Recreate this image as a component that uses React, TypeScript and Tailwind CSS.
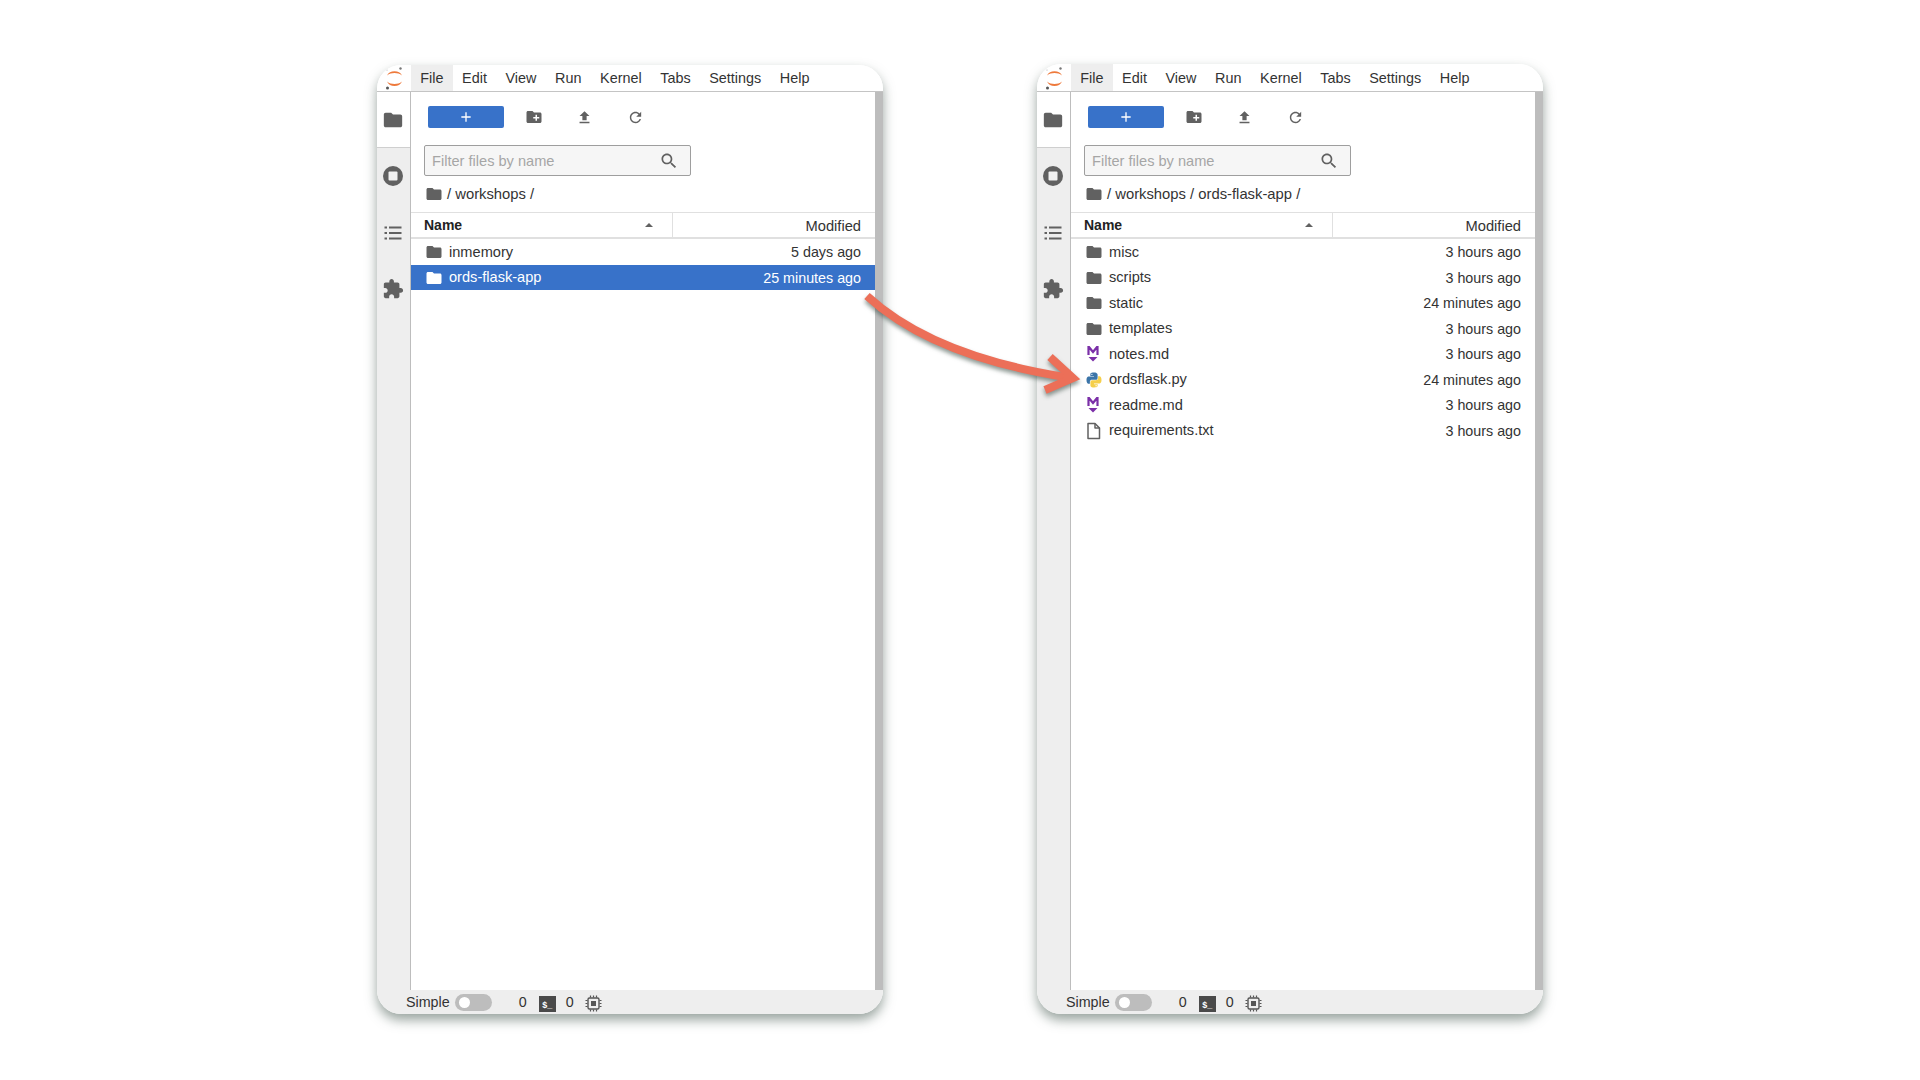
type FileKind = "folder" | "markdown" | "python" | "text";

interface FileRow {
  name: string;
  modified: string;
  kind: FileKind;
  selected?: boolean;
}

const FOLDER_PATH = "M10 4H4c-1.1 0-1.99.9-1.99 2L2 18c0 1.1.9 2 2 2h16c1.1 0 2-.9 2-2V8c0-1.1-.9-2-2-2h-8l-2-2z";

const menuItems = ["File", "Edit", "View", "Run", "Kernel", "Tabs", "Settings", "Help"];

const leftRows: FileRow[] = [
  { name: "inmemory", modified: "5 days ago", kind: "folder" },
  { name: "ords-flask-app", modified: "25 minutes ago", kind: "folder", selected: true },
];

const rightRows: FileRow[] = [
  { name: "misc", modified: "3 hours ago", kind: "folder" },
  { name: "scripts", modified: "3 hours ago", kind: "folder" },
  { name: "static", modified: "24 minutes ago", kind: "folder" },
  { name: "templates", modified: "3 hours ago", kind: "folder" },
  { name: "notes.md", modified: "3 hours ago", kind: "markdown" },
  { name: "ordsflask.py", modified: "24 minutes ago", kind: "python" },
  { name: "readme.md", modified: "3 hours ago", kind: "markdown" },
  { name: "requirements.txt", modified: "3 hours ago", kind: "text" },
];

function Glyph({ d, size, className }: { d: string; size: number; className?: string }) {
  return (
    <svg width={size} height={size} viewBox="0 0 24 24" className={className} fill="currentColor">
      <path d={d} />
    </svg>
  );
}

function JupyterLogo() {
  return (
    <svg width="20" height="26" viewBox="0 0 20 26">
      <path d="M3 10.500C4.500 7.500 7 6.200 10.500 6.200s6 1.300 7.500 4.300c-2.300-1.700-4.700-2.400-7.500-2.400S5.300 8.800 3 10.500z" fill="#ee7a3c" />
      <path d="M3 16.500c1.500 3 4 4.500 7.500 4.500s6-1.500 7.500-4.500c-2.300 1.800-4.700 2.500-7.500 2.500S5.300 18.300 3 16.500z" fill="#ee7a3c" />
      <circle cx="16.500" cy="3.500" r="1.200" fill="#777777" />
      <circle cx="3.500" cy="23" r="1.500" fill="#555555" />
      <circle cx="3" cy="5" r=".6" fill="#aaaaaa" />
    </svg>
  );
}

function MarkdownIcon() {
  return (
    <svg width="16" height="20" viewBox="0 0 16 20">
      <path d="M3.500 11V3.200h.6L8 8l3.900-4.800h.6V11" fill="none" stroke="#7b2fa8" strokeWidth="2.200" />
      <path d="M3.500 13h9L8 17.500z" fill="#7b2fa8" />
    </svg>
  );
}

function PythonIcon() {
  const half = "M11.900 2C6.800 2 7.100 4.200 7.100 4.200v2.300H12v.7H5.200S2 6.800 2 12s2.800 5 2.800 5h1.700v-2.400s-.1-2.800 2.800-2.800h4.800s2.700 0 2.700-2.600V4.700S16.700 2 11.900 2zM9.200 3.500a.9.900 0 1 1 0 1.800.9.900 0 0 1 0-1.800z";
  return (
    <svg width="18" height="18" viewBox="0 0 24 24">
      <path d={half} fill="#3a74a8" />
      <path d={half} fill="#f5cf4b" transform="rotate(180 12 12)" />
    </svg>
  );
}

function TextFileIcon() {
  return (
    <svg width="17" height="18" viewBox="0 0 17 18" fill="none" stroke="#616161" strokeWidth="1.500" strokeLinejoin="round">
      <path d="M3 1.500h7l4.500 4.500v10.500H3z" />
      <path d="M10 1.500V6h4.500" />
    </svg>
  );
}

function ChipIcon() {
  return (
    <svg width="17" height="17" viewBox="0 0 17 17" fill="none" stroke="#555555">
      <rect x="3" y="3" width="11" height="11" rx="1.500" strokeWidth="1.400" />
      <rect x="6" y="6" width="5" height="5" fill="#555555" stroke="none" />
      <path d="M5.500 .5v2M8.500 .5v2M11.500 .5v2M5.500 14.500v2M8.500 14.500v2M11.500 14.500v2M.5 5.500h2M.5 8.500h2M.5 11.500h2M14.500 5.500h2M14.500 8.500h2M14.500 11.500h2" strokeWidth="1.200" />
    </svg>
  );
}

function RowIcon({ kind, selected }: { kind: FileKind; selected?: boolean }) {
  if (kind === "markdown") return <MarkdownIcon />;
  if (kind === "python") return <PythonIcon />;
  if (kind === "text") return <TextFileIcon />;
  return <Glyph d={FOLDER_PATH} size={18} className={selected ? "text-white" : "text-[#616161]"} />;
}

function Sidebar() {
  return (
    <div className="flex w-[34px] shrink-0 flex-col border-r border-[#bdbdbd] bg-[#eeeeee] pr-px text-[#616161]">
      {/* Active tab */}
      <div className="-mr-px flex h-[56px] items-center justify-center border-b border-[#cfcfcf] bg-white pr-px">
        <Glyph d={FOLDER_PATH} size={22} />
      </div>
      <div className="flex h-[56px] items-center justify-center">
        <svg width="22" height="22" viewBox="0 0 22 22">
          <circle cx="11" cy="11" r="10" fill="currentColor" />
          <rect x="6.500" y="6.500" width="9" height="9" rx="1" fill="#f2f2f2" />
        </svg>
      </div>
      <div className="flex h-[57px] items-center justify-center">
        <svg width="20" height="20" viewBox="0 0 20 20" fill="currentColor">
          <rect x="1.500" y="3.500" width="2.500" height="2" />
          <rect x="6" y="3.500" width="12.500" height="2" />
          <rect x="1.500" y="9" width="2.500" height="2" />
          <rect x="6" y="9" width="12.500" height="2" />
          <rect x="1.500" y="14.500" width="2.500" height="2" />
          <rect x="6" y="14.500" width="12.500" height="2" />
        </svg>
      </div>
      <div className="flex h-[56px] items-center justify-center">
        <Glyph
          size={22}
          d="M20.500 11H19V7c0-1.100-.9-2-2-2h-4V3.500C13 2.120 11.880 1 10.500 1S8 2.120 8 3.500V5H4c-1.100 0-1.990.9-1.990 2v3.800H3.500c1.490 0 2.700 1.210 2.700 2.700s-1.210 2.700-2.700 2.700H2V20c0 1.100.9 2 2 2h3.800v-1.500c0-1.490 1.210-2.700 2.700-2.700 1.490 0 2.700 1.210 2.700 2.700V22H17c1.100 0 2-.9 2-2v-4h1.500c1.380 0 2.500-1.120 2.500-2.500S21.880 11 20.500 11z"
        />
      </div>
    </div>
  );
}

function Toolbar() {
  return (
    <div className="flex h-[36px] items-center pl-[17px] text-[#616161]">
      <div className="flex h-[22px] w-[76px] items-center justify-center rounded-[2px] bg-[#3872c9] text-white">
        <Glyph d="M19 13h-6v6h-2v-6H5v-2h6V5h2v6h6v2z" size={16} />
      </div>
      <div className="ml-[4px] flex w-[51px] justify-center">
        <Glyph
          size={18}
          d="M20 6h-8l-2-2H4c-1.110 0-1.990.89-1.990 2L2 18c0 1.110.89 2 2 2h16c1.110 0 2-.89 2-2V8c0-1.110-.89-2-2-2zm-1 8h-3v3h-2v-3h-3v-2h3V9h2v3h3v2z"
        />
      </div>
      <div className="flex w-[51px] justify-center">
        <Glyph d="M9 16h6v-6h4l-7-7-7 7h4zm-4 2h14v2H5z" size={17} />
      </div>
      <div className="flex w-[50px] justify-center">
        <Glyph
          size={17}
          d="M17.650 6.350C16.200 4.900 14.210 4 12 4c-4.420 0-7.990 3.580-7.990 8s3.570 8 7.990 8c3.730 0 6.840-2.550 7.730-6h-2.080c-.82 2.330-3.040 4-5.650 4-3.310 0-6-2.690-6-6s2.690-6 6-6c1.660 0 3.140.69 4.220 1.780L13 11h7V4l-2.350 2.350z"
        />
      </div>
    </div>
  );
}

function FilterBox() {
  return (
    <div className="ml-[13px] mt-[10px] flex h-[31px] w-[267px] items-center rounded-[2px] border-[1.500px] border-[#9e9e9e] bg-[#f6f6f6] pl-[7px] pr-[11px]">
      <input
        readOnly
        placeholder="Filter files by name"
        className="w-full min-w-0 bg-transparent pt-[2px] text-[14.600px] outline-none placeholder:text-[#a6a6a6]"
      />
      <Glyph
        size={20}
        className="shrink-0 text-[#616161]"
        d="M15.500 14h-.79l-.28-.27C15.410 12.590 16 11.110 16 9.500 16 5.910 13.090 3 9.500 3S3 5.910 3 9.500 5.910 16 9.500 16c1.610 0 3.090-.59 4.230-1.570l.27.28v.79l5 4.990L20.490 19l-4.990-5zm-6 0C7.010 14 5 11.990 5 9.500S7.010 5 9.500 5 14 7.010 14 9.500 11.990 14 9.500 14z"
      />
    </div>
  );
}

function FileTable({ rows }: { rows: FileRow[] }) {
  return (
    <div className="flex-1">
      <div className="flex h-[27px] items-center border-y border-b-[2px] border-y-[#e0e0e0] text-[14.700px] text-[#333333]">
        <div className="flex h-full w-[262px] items-center justify-between border-r border-[#e0e0e0] pl-[13px] pr-[19px]">
          <span className="pt-px text-[14px] font-bold text-[#222222]">Name</span>
          <span className="h-0 w-0 border-x-[4px] border-b-[4px] border-x-transparent border-b-[#616161]" />
        </div>
        <span className="flex-1 pr-[14px] pt-[3px] text-right">Modified</span>
      </div>
      {rows.map((row) => (
        <div
          key={row.name}
          className={`flex h-[25.500px] items-center pl-[14px] pr-[14px] text-[14.600px] ${
            row.selected ? "bg-[#3872c9] text-white" : "text-[#333333]"
          }`}
        >
          <span className="flex w-[24px] shrink-0 items-center pt-px">
            <RowIcon kind={row.kind} selected={row.selected} />
          </span>
          <span className="flex-1 pt-[2px]">{row.name}</span>
          <span className="pt-[2px] text-[14.300px]">{row.modified}</span>
        </div>
      ))}
    </div>
  );
}

function StatusBar() {
  return (
    <div className="flex h-[24px] shrink-0 items-center bg-[#eeeeee] pl-[29px] text-[14.300px] text-[#333333]">
      <span className="pt-[2px]">Simple</span>
      <span className="ml-[5px] flex h-[17px] w-[37px] items-center rounded-full bg-[#bdbdbd] pl-[4px]">
        <span className="h-[11px] w-[11px] rounded-full bg-white" />
      </span>
      <span className="ml-[27px] pt-[2px]">0</span>
      <span className="ml-[12px] mt-[3px] flex h-[16px] w-[17px] items-end justify-center bg-[#4a4a4a] pb-px text-[9px] leading-[11px] font-bold text-white">
        $_
      </span>
      <span className="ml-[10px] pt-[2px]">0</span>
      <span className="ml-[11px] flex pt-[2px]">
        <ChipIcon />
      </span>
    </div>
  );
}

function LabWindow({
  rows,
  path,
  heightClass,
  menuClass,
  topClass,
}: {
  rows: FileRow[];
  path: string;
  heightClass: string;
  menuClass: string;
  topClass: string;
}) {
  return (
    <div
      className={`flex w-[506px] shrink-0 flex-col overflow-hidden rounded-[24px] bg-white shadow-[0_6px_12px_rgba(70,90,80,0.55)] ${heightClass} ${topClass}`}
    >
      <div className={`flex shrink-0 items-stretch border-b border-[#c4c4c4] bg-white text-[14.400px] text-[#333333] ${menuClass}`}>
        <div className="flex w-[34px] items-center justify-center">
          <JupyterLogo />
        </div>
        {menuItems.map((item) => (
          <span key={item} className={`flex items-center px-[9.300px] pt-[2px] ${item === "File" ? "bg-[#eeeeee]" : ""}`}>
            {item}
          </span>
        ))}
      </div>
      <div className="flex min-h-0 flex-1">
        <Sidebar />
        <div className="flex min-w-0 flex-1 flex-col pt-[7px]">
          <Toolbar />
          <FilterBox />
          <div className="flex h-[36px] shrink-0 items-center pl-[14px] text-[14.800px] text-[#333333]">
            <Glyph d={FOLDER_PATH} size={18} className="mr-[4px] text-[#616161]" />
            <span>{path}</span>
          </div>
          <FileTable rows={rows} />
        </div>
        <div className="w-[8px] shrink-0 bg-[#bdbdbd]" />
      </div>
      <StatusBar />
    </div>
  );
}

export default function App() {
  return (
    <div className="relative flex min-h-screen w-full items-start gap-[154px] bg-white pl-[377px] pt-[64px] font-['Liberation_Sans',Arial,sans-serif]">
      <LabWindow rows={leftRows} path="/ workshops /" heightClass="h-[949px]" menuClass="h-[27px]" topClass="mt-px" />
      <LabWindow rows={rightRows} path="/ workshops / ords-flask-app /" heightClass="h-[950px]" menuClass="h-[28px]" topClass="" />
      {/* Arrow lies over both windows */}
      <svg
        width="235"
        height="120"
        viewBox="0 0 235 120"
        className="absolute left-[855px] top-[285px] drop-shadow-[0_3px_2px_rgba(50,70,60,0.55)]"
        fill="none"
        stroke="#ec6f58"
        strokeWidth="8"
      >
        <path d="M12 11C60 55 130 80 216 93" />
        <path d="M195 72L218 93L190 105" />
      </svg>
    </div>
  );
}
